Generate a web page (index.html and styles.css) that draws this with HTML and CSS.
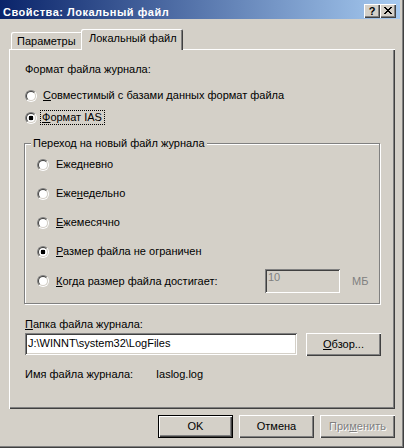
FILE: index.html
```html
<!DOCTYPE html>
<html>
<head>
<meta charset="utf-8">
<link rel="stylesheet" href="styles.css">
</head>
<body>
<div class="window">
  <div class="titlebar">
    <span class="title">Свойства: Локальный файл</span>
    <div class="tbtns">
      <span class="tbtn help">?</span>
      <span class="tbtn close"><svg width="8" height="7" viewBox="0 0 8 7" shape-rendering="crispEdges"><path d="M0 0h2v1h-2zM6 0h2v1h-2zM1 1h2v1h-2zM5 1h2v1h-2zM2 2h4v1h-4zM3 3h2v1h-2zM2 4h4v1h-4zM1 5h2v1h-2zM5 5h2v1h-2zM0 6h2v1h-2zM6 6h2v1h-2z" fill="#000"/></svg></span>
    </div>
  </div>
  <div class="client">
    <div class="tabs">
      <div class="tab">Параметры</div>
      <div class="tab active">Локальный файл</div>
    </div>
    <div class="panel">
      <div class="label l-format">Формат файла журнала:</div>
      <div class="row r1"><span class="radio"></span><span class="text"><u>С</u>овместимый с базами данных формат файла</span></div>
      <div class="row r2"><span class="radio checked"></span><span class="text focus"><u>Ф</u>ормат IAS</span></div>
      <fieldset class="group">
        <legend>Переход на новый файл журнала</legend>
        <div class="row g first"><span class="radio"></span><span class="text">Еже<u>д</u>невно</span></div>
        <div class="row g"><span class="radio"></span><span class="text">Еже<u>н</u>едельно</span></div>
        <div class="row g"><span class="radio"></span><span class="text"><u>Е</u>жемесячно</span></div>
        <div class="row g"><span class="radio checked"></span><span class="text"><u>Р</u>азмер файла не ограничен</span></div>
        <div class="row g last"><span class="radio"></span><span class="text wide"><u>К</u>огда размер файла достигает:</span><span class="edit small disabled">10</span><span class="unit">МБ</span></div>
      </fieldset>
      <div class="label l-folder"><u>П</u>апка файла журнала:</div>
      <div class="pathrow">
        <span class="edit path">J:\WINNT\system32\LogFiles</span>
        <span class="btn browse"><u>О</u>бзор...</span>
      </div>
      <div class="namerow"><span class="namelabel">Имя файла журнала:</span><span class="nameval">Iaslog.log</span></div>
    </div>
    <div class="buttons">
      <span class="btn default">OK</span>
      <span class="btn">Отмена</span>
      <span class="btn disabled">При<u>м</u>енить</span>
    </div>
  </div>
</div>
</body>
</html>
```

FILE: styles.css
```css
html, body {
  margin: 0;
  padding: 0;
  background: #d4d0c8;
}
body {
  font-family: "Liberation Sans", Arial, sans-serif;
  font-size: 11px;
  color: #000;
}
.window {
  width: 404px;
  height: 448px;
  box-sizing: border-box;
  padding: 0 4px 4px 0;
  box-shadow: inset -1px -1px 0 #404040, inset -2px -2px 0 #808080;
}
.titlebar {
  height: 19px;
  display: flex;
  justify-content: space-between;
  background: linear-gradient(to right, #0a246a, #a6caf0);
}
.title {
  color: #fff;
  font-weight: bold;
  letter-spacing: 0.5px;
  line-height: 13px;
  padding: 6px 0 0 3px;
  white-space: nowrap;
}
.tbtns {
  display: flex;
  padding: 4px 4px 0 0;
}
.tbtn {
  width: 16px;
  height: 14px;
  box-sizing: border-box;
  background: #d4d0c8;
  box-shadow: inset 1px 1px 0 #fff, inset -1px -1px 0 #404040, inset -2px -2px 0 #808080;
  display: flex;
  align-items: center;
  justify-content: center;
  font-weight: bold;
  font-size: 11px;
  line-height: 12px;
}
.tbtn.close svg {
  display: block;
  margin: 0 0 1px 0;
}
.client {
  padding: 0 5px 0 9px;
}
.tabs {
  display: flex;
  align-items: flex-end;
  height: 20px;
  margin-top: 10px;
}
.tab {
  height: 17px;
  box-sizing: border-box;
  padding: 3px 6px 0 6px;
  margin-left: 2px;
  width: 72px;
  line-height: 13px;
  border-radius: 2px 2px 0 0;
  box-shadow: inset 1px 1px 0 #fff, inset -1px 0 0 #404040, inset -2px 0 0 #808080;
  white-space: nowrap;
}
.tab.active {
  position: relative;
  z-index: 1;
  height: 21px;
  width: 102px;
  margin-left: -2px;
  margin-bottom: -1px;
  padding: 3px 0 0 8px;
  background: #d4d0c8;
}
.panel {
  height: 360px;
  box-sizing: border-box;
  padding: 14px 0 0 16px;
  box-shadow: inset 1px 1px 0 #fff, inset -1px -1px 0 #404040, inset -2px -2px 0 #808080;
}
.label {
  line-height: 13px;
  height: 13px;
  white-space: nowrap;
}
.row {
  display: flex;
  align-items: center;
  height: 13px;
  white-space: nowrap;
}
.r1 { margin-top: 13px; }
.r2 { margin-top: 9px; }
.radio {
  width: 12px;
  height: 12px;
  box-sizing: border-box;
  border-radius: 50%;
  border: 1px solid;
  border-color: #808080 #fff #fff #808080;
  flex: none;
  display: flex;
}
.radio::before {
  content: "";
  flex: 1;
  border-radius: 50%;
  border: 1px solid;
  border-color: #404040 #d4d0c8 #d4d0c8 #404040;
  background: #fff;
}
.radio.checked::before {
  background: radial-gradient(circle at 50% 50%, #000 0 2.2px, #fff 2.6px);
}
.text {
  margin-left: 5px;
  line-height: 13px;
  padding: 0 1px;
}
.focus {
  outline: 1px dotted #000;
  outline-offset: 0;
  margin-left: 4px;
  padding: 0 2px 0 1px;
}
.group {
  margin: 13px 0 0 -1px;
  padding: 0 0 10px 12px;
  width: 356px;
  box-sizing: border-box;
  border: 1px solid #808080;
  box-shadow: 1px 1px 0 #fff, inset 1px 1px 0 #fff;
}
.group legend {
  margin-left: -6px;
  padding: 0 2px;
  line-height: 13px;
  background: #d4d0c8;
}
.row.g {
  margin-top: 16px;
}
.row.g .text {
  margin-left: 6px;
}
.row.g.first {
  margin-top: 8px;
}
.row.g.last {
  height: 24px;
  margin-top: 11px;
}
.text.wide {
  width: 208px;
}
.edit {
  box-sizing: border-box;
  background: #fff;
  box-shadow: inset 1px 1px 0 #808080, inset -1px -1px 0 #fff, inset 2px 2px 0 #404040, inset -2px -2px 0 #d4d0c8;
  line-height: 13px;
  white-space: nowrap;
}
.edit.small {
  width: 75px;
  height: 24px;
  padding: 2px 0 0 3px;
  align-self: flex-start;
}
.edit.disabled {
  background: #d4d0c8;
  color: #808080;
}
.unit {
  margin-left: 12px;
  color: #808080;
}
.l-folder {
  margin-top: 14px;
}
.pathrow {
  display: flex;
  align-items: flex-start;
  margin-top: 2px;
}
.edit.path {
  width: 272px;
  height: 22px;
  padding: 4px 0 0 3px;
}
.btn {
  width: 75px;
  height: 23px;
  box-sizing: border-box;
  background: #d4d0c8;
  box-shadow: inset 1px 1px 0 #fff, inset -1px -1px 0 #404040, inset -2px -2px 0 #808080;
  display: flex;
  align-items: center;
  justify-content: center;
  line-height: 13px;
  white-space: nowrap;
}
.btn.browse {
  margin-left: 9px;
}
.namerow {
  display: flex;
  margin-top: 12px;
  line-height: 13px;
  height: 13px;
}
.namelabel {
  width: 131px;
}
.buttons {
  display: flex;
  justify-content: flex-end;
  gap: 6px;
  margin-top: 6px;
}
.btn.default {
  border: 1px solid #000;
}
.btn.disabled {
  color: #808080;
  text-shadow: 1px 1px 0 #fff;
}
u {
  text-decoration: underline;
  text-underline-offset: 1px;
}
```
